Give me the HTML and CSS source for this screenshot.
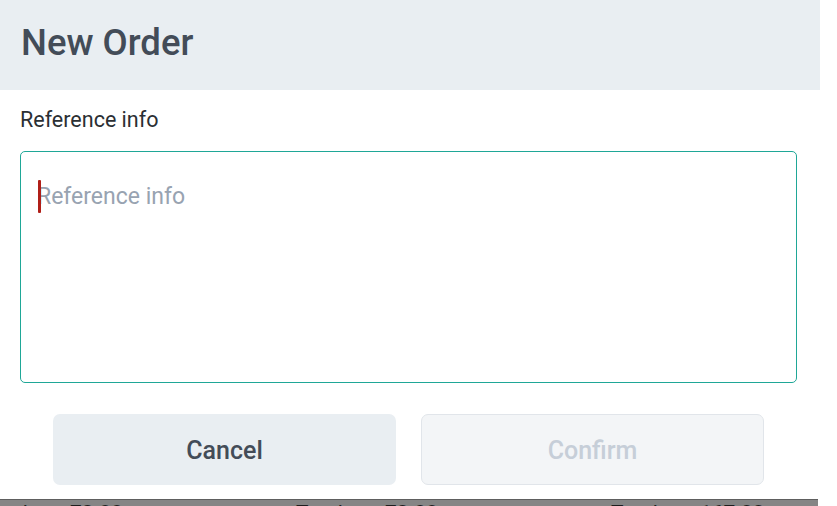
FILE: index.html
```html
<!DOCTYPE html>
<html lang="en">
<head>
  <meta charset="UTF-8">
  <title>New Order</title>
  <meta name="viewport" content="width=device-width, initial-scale=1">
  <link rel="stylesheet" href="styles.css">
</head>
<body>
  <div class="modal">
    <div class="modal-header">
      <h1>New Order</h1>
    </div>

    <div class="modal-body">
      <label class="field-label" for="ref">Reference info</label>
      <div class="input-wrap">
        <textarea id="ref" class="ref-input" placeholder="Reference info"></textarea>
        <span class="caret"></span>
      </div>
    </div>

    <div class="modal-actions">
      <button class="btn btn-cancel">Cancel</button>
      <button class="btn btn-confirm" disabled>Confirm</button>
    </div>
  </div>

  <div class="behind-row">
    <div class="cell"><span class="cell-label">Total</span><span class="cell-value">72.88</span></div>
    <div class="cell"><span class="cell-label">Total</span><span class="cell-value">72.88</span></div>
    <div class="cell"><span class="cell-label">Total</span><span class="cell-value">167.33</span></div>
  </div>
</body>
</html>
```

FILE: styles.css
```css
* {
  box-sizing: border-box;
}

html,
body {
  height: 100%;
}

body {
  margin: 0;
  background: #fff;
  font-family: 'Roboto', 'Liberation Sans', sans-serif;
  overflow: hidden;
}

.modal {
  width: 820px;
  background: #fff;
}

.modal-header {
  height: 90px;
  background: #e9eef2;
  padding: 0 20px 4px 21px;
  display: flex;
  align-items: center;
}

.modal-header h1 {
  margin: 0;
  font-size: 36.5px;
  font-weight: 500;
  color: #434c58;
  line-height: 1;
}

.modal-body {
  padding: 19px 23px 0 20px;
}

.field-label {
  display: block;
  font-size: 21.5px;
  line-height: 22px;
  color: #2b2f33;
  margin-bottom: 20px;
}

.input-wrap {
  position: relative;
}

.ref-input {
  display: block;
  width: 100%;
  height: 232px;
  border: 1.5px solid #1fa797;
  border-radius: 5px;
  padding: 33px 16px;
  font-family: inherit;
  font-size: 23px;
  line-height: 24px;
  color: #2b2f33;
  resize: none;
  outline: none;
}

.ref-input::placeholder {
  color: #98a3b1;
}

.caret {
  position: absolute;
  left: 18px;
  top: 29px;
  width: 3px;
  height: 33px;
  border-radius: 1px;
  background: #b01f18;
}

.modal-actions {
  display: grid;
  grid-template-columns: 343px 343px;
  gap: 25px;
  padding: 31px 0 14px 53px;
}

.btn {
  height: 71px;
  border-radius: 7px;
  font-family: inherit;
  font-size: 25px;
  font-weight: 500;
  padding-top: 2px;
}

.btn-cancel {
  background: #e9eef2;
  border: none;
  color: #434c58;
}

.btn-confirm {
  background: #f3f5f7;
  border: 1px solid #e1e5ea;
  color: #c6ced8;
}

.behind-row {
  width: 818px;
  height: 30px;
  background: #858585;
  border-top: 1px solid #5e5e5e;
  display: flex;
  overflow: hidden;
  padding-top: 2px;
  font-size: 21px;
  line-height: 22px;
  color: #1e1e1e;
}

.cell {
  width: 315px;
  display: flex;
  flex-shrink: 0;
}

.cell:first-child {
  margin-left: -19px;
}

.cell-label {
  width: 89px;
}
```
